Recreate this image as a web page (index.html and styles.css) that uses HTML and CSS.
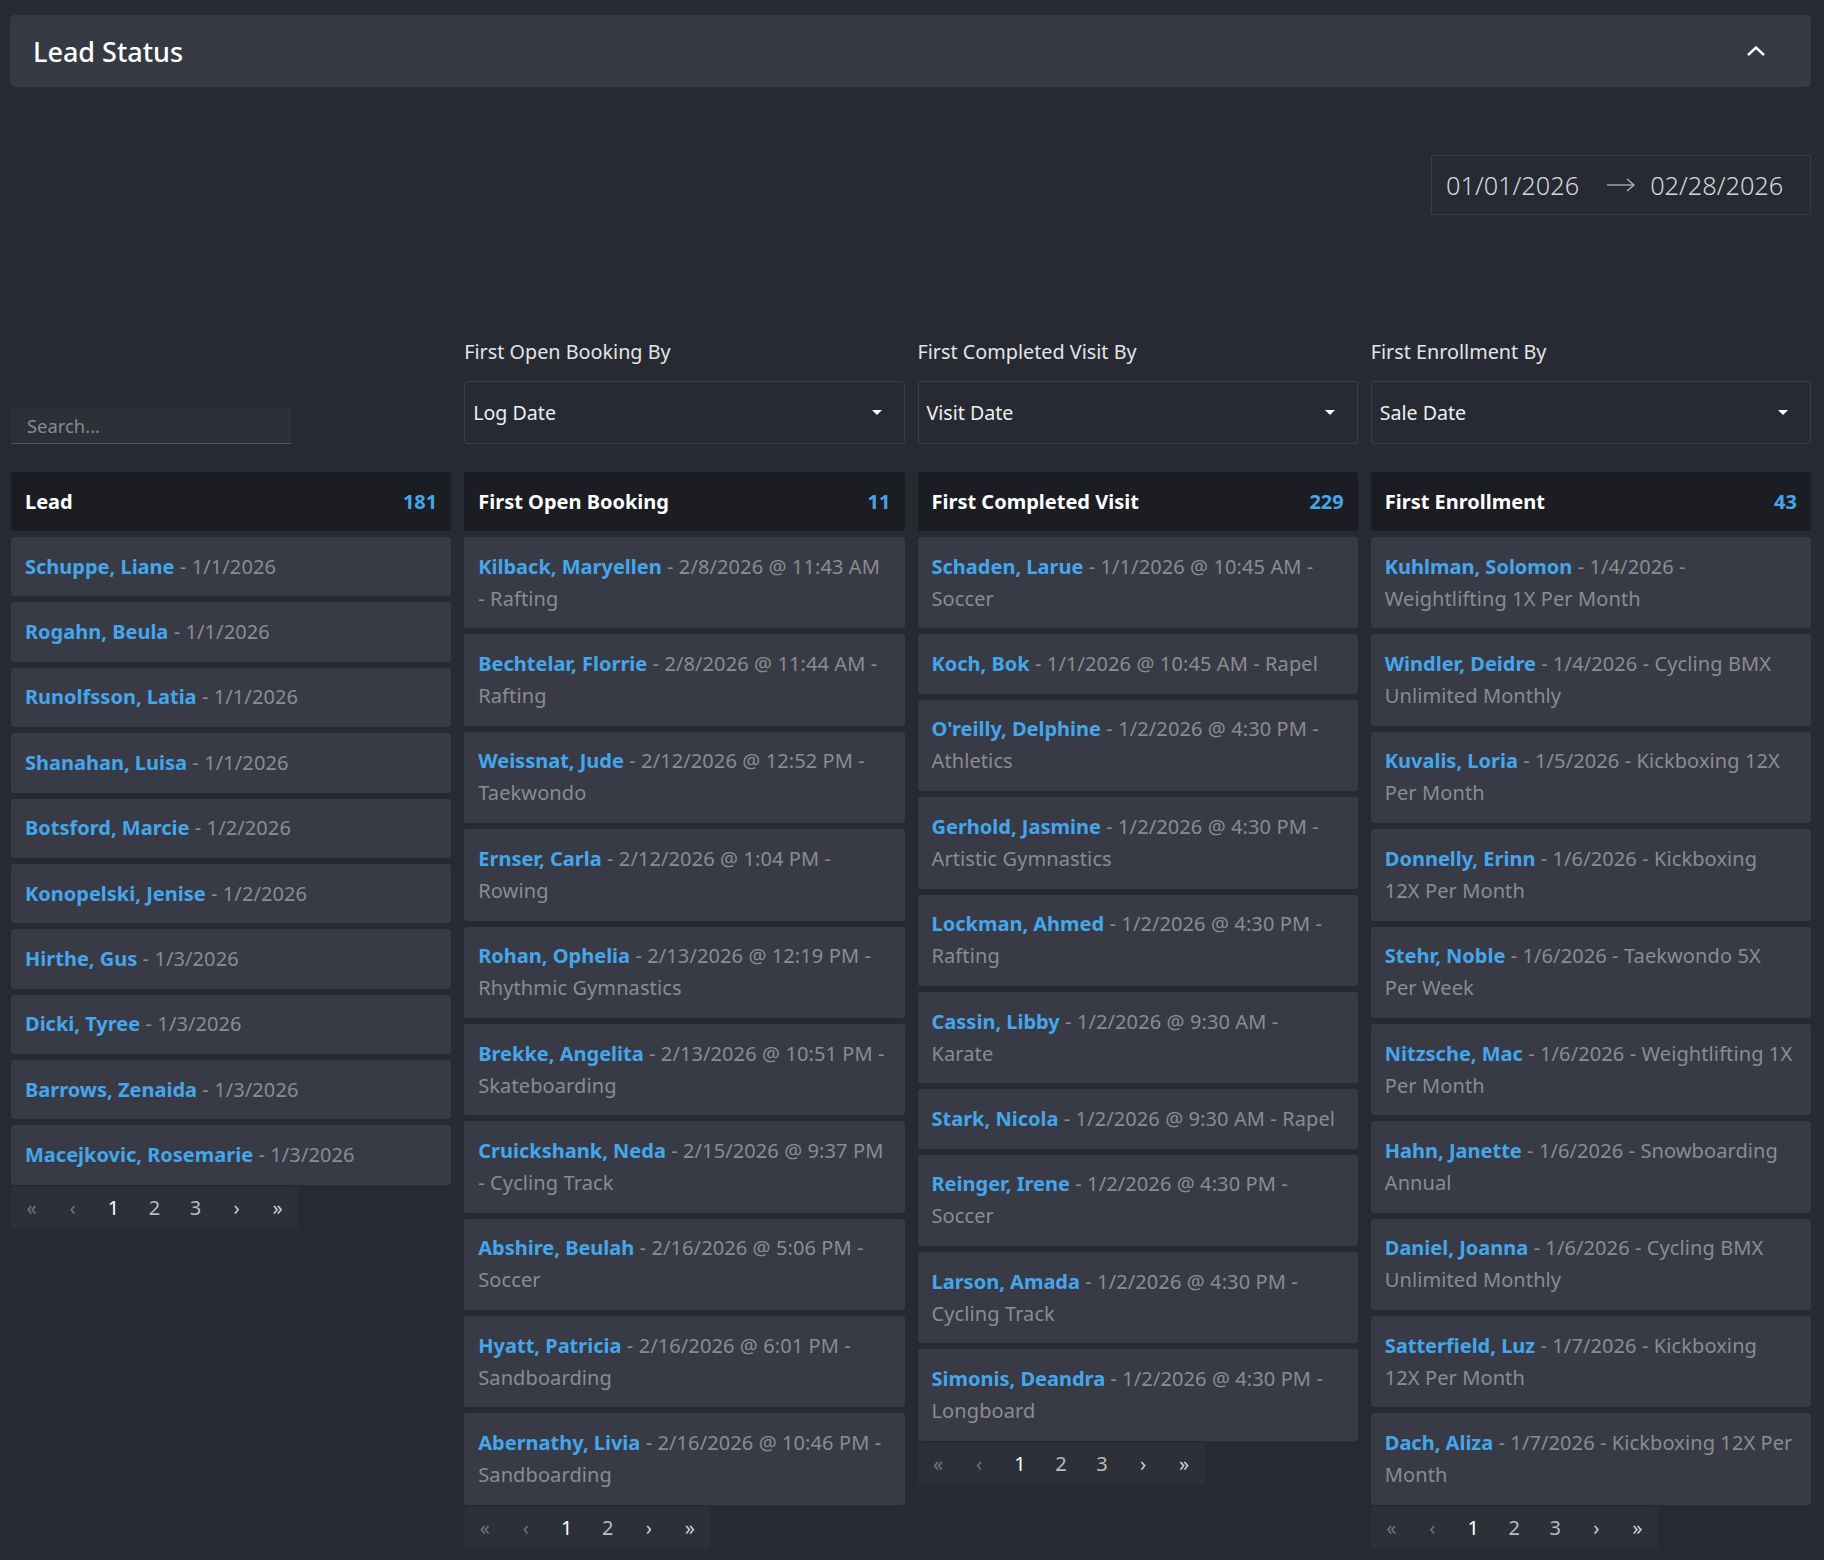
FILE: index.html
```html
<!DOCTYPE html>
<html>
<head>
    <title>Lead Status</title>
    <meta charset="utf-8"/>
    <link rel="stylesheet" href="styles.css">

    <script type="text/javascript">

        var columns = [
            {
                title: "Lead", count: 181, pages: 3,
                items: [
                    ["Schuppe, Liane", "1/1/2026"],
                    ["Rogahn, Beula", "1/1/2026"],
                    ["Runolfsson, Latia", "1/1/2026"],
                    ["Shanahan, Luisa", "1/1/2026"],
                    ["Botsford, Marcie", "1/2/2026"],
                    ["Konopelski, Jenise", "1/2/2026"],
                    ["Hirthe, Gus", "1/3/2026"],
                    ["Dicki, Tyree", "1/3/2026"],
                    ["Barrows, Zenaida", "1/3/2026"],
                    ["Macejkovic, Rosemarie", "1/3/2026"]
                ]
            },
            {
                title: "First Open Booking", count: 11, pages: 2,
                items: [
                    ["Kilback, Maryellen", "2/8/2026 @ 11:43 AM - Rafting"],
                    ["Bechtelar, Florrie", "2/8/2026 @ 11:44 AM - Rafting"],
                    ["Weissnat, Jude", "2/12/2026 @ 12:52 PM - Taekwondo"],
                    ["Ernser, Carla", "2/12/2026 @ 1:04 PM - Rowing"],
                    ["Rohan, Ophelia", "2/13/2026 @ 12:19 PM - Rhythmic Gymnastics"],
                    ["Brekke, Angelita", "2/13/2026 @ 10:51 PM - Skateboarding"],
                    ["Cruickshank, Neda", "2/15/2026 @ 9:37 PM - Cycling Track"],
                    ["Abshire, Beulah", "2/16/2026 @ 5:06 PM - Soccer"],
                    ["Hyatt, Patricia", "2/16/2026 @ 6:01 PM - Sandboarding"],
                    ["Abernathy, Livia", "2/16/2026 @ 10:46 PM - Sandboarding"]
                ]
            },
            {
                title: "First Completed Visit", count: 229, pages: 3,
                items: [
                    ["Schaden, Larue", "1/1/2026 @ 10:45 AM - Soccer"],
                    ["Koch, Bok", "1/1/2026 @ 10:45 AM - Rapel"],
                    ["O'reilly, Delphine", "1/2/2026 @ 4:30 PM - Athletics"],
                    ["Gerhold, Jasmine", "1/2/2026 @ 4:30 PM - Artistic Gymnastics"],
                    ["Lockman, Ahmed", "1/2/2026 @ 4:30 PM - Rafting"],
                    ["Cassin, Libby", "1/2/2026 @ 9:30 AM - Karate"],
                    ["Stark, Nicola", "1/2/2026 @ 9:30 AM - Rapel"],
                    ["Reinger, Irene", "1/2/2026 @ 4:30 PM - Soccer"],
                    ["Larson, Amada", "1/2/2026 @ 4:30 PM - Cycling Track"],
                    ["Simonis, Deandra", "1/2/2026 @ 4:30 PM - Longboard"]
                ]
            },
            {
                title: "First Enrollment", count: 43, pages: 3,
                items: [
                    ["Kuhlman, Solomon", "1/4/2026 - Weightlifting 1X Per Month"],
                    ["Windler, Deidre", "1/4/2026 - Cycling BMX Unlimited Monthly"],
                    ["Kuvalis, Loria", "1/5/2026 - Kickboxing 12X Per Month"],
                    ["Donnelly, Erinn", "1/6/2026 - Kickboxing 12X Per Month"],
                    ["Stehr, Noble", "1/6/2026 - Taekwondo 5X Per Week"],
                    ["Nitzsche, Mac", "1/6/2026 - Weightlifting 1X Per Month"],
                    ["Hahn, Janette", "1/6/2026 - Snowboarding Annual"],
                    ["Daniel, Joanna", "1/6/2026 - Cycling BMX Unlimited Monthly"],
                    ["Satterfield, Luz", "1/7/2026 - Kickboxing 12X Per Month"],
                    ["Dach, Aliza", "1/7/2026 - Kickboxing 12X Per Month"]
                ]
            }
        ];

        function renderColumns() {
            var lists = document.querySelectorAll(".board-col");
            for (var c = 0; c < columns.length; c++) {
                var col = columns[c];
                var str = `
                    <div class="col-head">
                        <span>${col.title}</span>
                        <span class="col-count">${col.count}</span>
                    </div>
                `;
                for (var i = 0; i < col.items.length; i++) {
                    var item = col.items[i];
                    str += `<div class="lead-item"><a class="lead-name">${item[0]}</a> - ${item[1]}</div>`;
                }
                str += `<div class="pager"><span class="pg-dim">&laquo;</span><span class="pg-dim">&lsaquo;</span><span class="pg-active">1</span>`;
                for (var p = 2; p <= col.pages; p++) {
                    str += `<span class="pg-num">${p}</span>`;
                }
                str += `<span class="pg-arrow">&rsaquo;</span><span class="pg-arrow">&raquo;</span></div>`;
                lists[c].innerHTML = str;
            }
        }

    </script>
</head>

<body onload="renderColumns()">

    <div class="page">
        <div class="panel-head">
            <h1>Lead Status</h1>
            <svg class="chevron" width="18" height="10" viewBox="0 0 18 10">
                <polyline points="1,9 9,1.5 17,9" fill="none" stroke="#fff" stroke-width="2.4"/>
            </svg>
        </div>

        <div class="date-row">
            <div class="date-range">
                <span>01/01/2026</span>
                <svg class="date-arrow" width="30" height="14" viewBox="0 0 30 14">
                    <line x1="1" y1="7" x2="28" y2="7" stroke="#b5b6ba" stroke-width="1.3"/>
                    <polyline points="21,1 28,7 21,13" fill="none" stroke="#b5b6ba" stroke-width="1.3"/>
                </svg>
                <span>02/28/2026</span>
            </div>
        </div>

        <div class="filters">
            <div class="filter">
                <input type="text" class="search" placeholder="Search..." />
            </div>
            <div class="filter">
                <label>First Open Booking By</label>
                <div class="select"><span>Log Date</span><span class="caret"></span></div>
            </div>
            <div class="filter">
                <label>First Completed Visit By</label>
                <div class="select"><span>Visit Date</span><span class="caret"></span></div>
            </div>
            <div class="filter">
                <label>First Enrollment By</label>
                <div class="select"><span>Sale Date</span><span class="caret"></span></div>
            </div>
        </div>

        <div class="board">
            <div class="board-col"></div>
            <div class="board-col"></div>
            <div class="board-col"></div>
            <div class="board-col"></div>
        </div>
    </div>

</body>
</html>
```

FILE: styles.css
```css
body {
    background-color: #272a32;
    margin: 0px;
    padding: 0px;
    font-family: "Noto Sans", "Open Sans", sans-serif;
    color: #e2e3e5;
}

.page {
    padding: 15px 13px 30px 10px;
}

.panel-head {
    display: flex;
    align-items: center;
    justify-content: space-between;
    height: 72px;
    padding: 0 46px 0 23px;
    background-color: #373a44;
    border-radius: 5px;
}
.panel-head h1 {
    margin: 0px;
    font-size: 27px;
    font-weight: 500;
    color: #fff;
}

.date-row {
    display: flex;
    justify-content: flex-end;
    margin-top: 68px;
}
.date-range {
    display: flex;
    align-items: center;
    width: 380px;
    height: 60px;
    box-sizing: border-box;
    padding: 0 14px;
    border: 1px solid #3a3d46;
    border-radius: 2px;
    font-size: 25.3px;
    font-weight: 300;
    color: #d6d7da;
}
.date-arrow {
    margin: 0 14px 0 27px;
}

.filters, .board {
    display: grid;
    grid-template-columns: repeat(4, 1fr);
    column-gap: 13px;
    padding-left: 1px;
}
.filters {
    margin-top: 123px;
}
.filter {
    display: flex;
    flex-direction: column;
    justify-content: flex-end;
}
.filter label {
    font-size: 19.8px;
    line-height: 28px;
    margin-bottom: 15px;
    color: #e4e5e7;
}
.select {
    display: flex;
    align-items: center;
    justify-content: space-between;
    height: 63px;
    box-sizing: border-box;
    padding: 0 22px 0 8px;
    border: 1px solid #3b3e47;
    border-radius: 3px;
    font-size: 19.6px;
    color: #eeeff0;
}
.caret {
    width: 0;
    height: 0;
    border-left: 5px solid transparent;
    border-right: 5px solid transparent;
    border-top: 5px solid #fff;
}
.search {
    width: 280px;
    height: 36px;
    box-sizing: border-box;
    padding: 0 16px;
    background-color: #2d3039;
    border: 0px;
    border-bottom: 1px solid #50535b;
    font-family: inherit;
    font-size: 18.4px;
    color: #ddd;
}
.search::placeholder {
    color: #878a90;
}

.board {
    margin-top: 28px;
    align-items: start;
}
.board-col {
    display: flex;
    flex-direction: column;
    gap: 6px;
}
.col-head {
    display: flex;
    align-items: center;
    justify-content: space-between;
    height: 59px;
    padding: 0 14px;
    background-color: #1c1d22;
    border-radius: 3px;
    font-size: 20px;
    font-weight: 700;
    color: #fff;
}
.col-count {
    color: #45a6ec;
}
.lead-item {
    padding: 13.7px 17px 13.7px 14px;
    background-color: #383b45;
    border-radius: 3px;
    font-size: 20px;
    line-height: 32px;
    letter-spacing: 0.1px;
    color: #8a8c93;
}
.lead-name {
    color: #45a6ec;
    font-weight: 700;
    letter-spacing: 0px;
}

.pager {
    display: flex;
    align-self: flex-start;
    align-items: center;
    height: 42px;
    margin-top: -4px;
    background-color: #2d3039;
    border-radius: 4px;
    font-size: 20px;
}
.pager span {
    width: 41px;
    text-align: center;
}
.pg-dim {color: #71747b;}
.pg-active {color: #fff;}
.pg-num {color: #b9bbbf;}
.pg-arrow {color: #cfd0d3;}
```
